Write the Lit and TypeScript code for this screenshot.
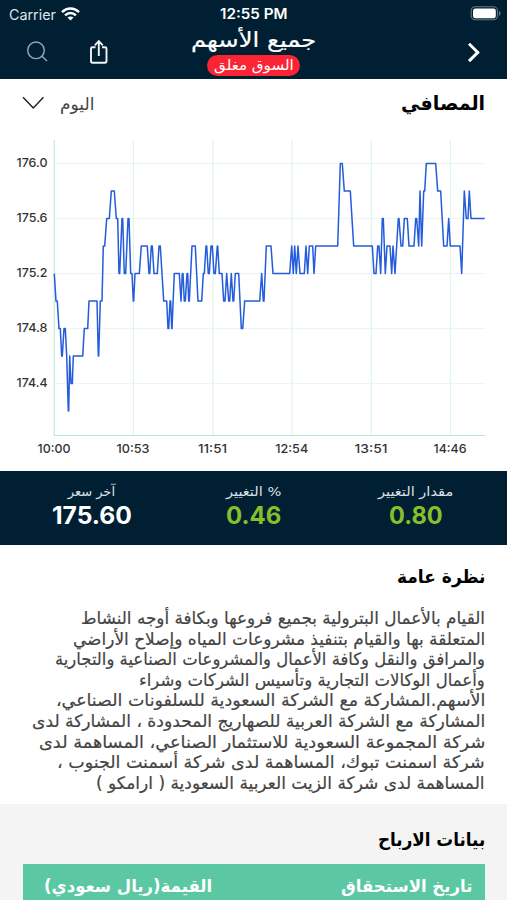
import { LitElement, html, svg, css } from "lit";
import { customElement, property, query } from "lit/decorators.js";

/** One line of text, condensed or widened horizontally to an exact width. */
@customElement("fit-text")
class FitText extends LitElement {
  static styles = css`
    :host { display: block; white-space: nowrap; flex: none; }
    .ink { display: inline-block; transform-origin: 100% 50%; }
    .box { display: flex; }
  `;
  @property({ type: Number }) w = 0;
  @query(".ink") ink!: HTMLElement;
  @query(".box") box!: HTMLElement;

  render() {
    return html`<div class="box" style="width:${this.w}px"><span class="ink"><slot></slot></span></div>`;
  }

  firstUpdated() {
    this.fit();
    document.fonts?.ready.then(() => this.fit());
  }

  fit() {
    const natural = this.ink.offsetWidth;
    const rtl = getComputedStyle(this).direction === "rtl";
    this.ink.style.transformOrigin = rtl ? "100% 50%" : "0 50%";
    if (natural) this.ink.style.transform = `scaleX(${this.w / natural})`;
  }
}

const TOP = 163.6;
const STEP = 27.5;
/** [x, ticks of 0.2 below 176.0] */
const SERIES: [number, number][] = [
  [163,4],[168,5],[172,5],[177,6],[181,6],[185,7],[187,7],[192,6],[196,6],[200,7],[205,9],[206,9],[209,7],[213,8],[217,8],[220,7],[248,7],[253,6],[263,6],[267,5],[291,5],[295,7],[296,7],[301,5],[306,5],[310,3],[314,3],[320,2],[328,2],[334,1],[343,1],[349,2],[353,2],[357,4],[359,4],[366,2],[368,2],[373,4],[377,4],[384,2],[387,2],[392,4],[396,4],[400,5],[401,5],[405,4],[418,4],[424,3],[442,3],[447,4],[449,4],[454,3],[457,3],[462,4],[472,4],[477,3],[481,3],[491,5],[500,5],[504,6],[506,6],[510,5],[512,5],[515,6],[516,6],[523,4],[538,4],[543,5],[547,4],[549,4],[553,5],[556,5],[561,4],[563,4],[566,5],[568,5],[576,3],[586,3],[594,5],[605,5],[610,4],[613,4],[618,3],[620,3],[625,4],[628,4],[633,3],[637,3],[642,4],[646,4],[652,3],[653,3],[658,4],[666,4],[671,5],[675,5],[680,4],[686,5],[689,5],[694,4],[699,5],[701,5],[706,4],[716,4],[724,6],[728,6],[734,5],[779,5],[785,4],[790,5],[792,5],[799,3],[813,3],[819,4],[869,4],[875,3],[880,4],[884,3],[889,4],[894,3],[900,4],[913,4],[918,3],[923,4],[928,3],[938,3],[942,4],[947,3],[1013,3],[1021,0],[1027,0],[1033,1],[1051,1],[1061,3],[1117,3],[1122,4],[1128,4],[1133,3],[1137,3],[1142,4],[1147,2],[1150,2],[1156,4],[1161,3],[1170,3],[1175,4],[1179,3],[1185,4],[1195,2],[1197,2],[1203,3],[1208,3],[1213,2],[1222,2],[1227,3],[1242,3],[1247,2],[1250,2],[1256,3],[1260,1],[1265,3],[1271,1],[1274,1],[1279,0],[1307,0],[1313,1],[1322,1],[1331,3],[1341,3],[1346,2],[1351,3],[1380,3],[1385,4],[1393,1],[1399,2],[1404,2],[1408,1],[1413,2],[1454,2],
];
const PRICES = ["176.0", "175.6", "175.2", "174.8", "174.4"];
const TIMES: [string, number][] = [
  ["10:00", 54], ["10:53", 133], ["11:51", 212.5], ["12:54", 291.7], ["13:51", 371], ["14:46", 450],
];
const STATS = [
  { label: "مقدار التغيير", lw: 75, value: "0.80", vw: 54, up: true },
  { label: "% التغيير", lw: 55, value: "0.46", vw: 55, up: true },
  { label: "آخر سعر", lw: 47, value: "175.60", vw: 80, up: false },
];
const ABOUT: [string, number][] = [
  ["القيام بالأعمال البترولية بجميع فروعها وبكافة أوجه النشاط", 404],
  ["المتعلقة بها والقيام بتنفيذ مشروعات المياه وإصلاح الأراضي", 412],
  ["والمرافق والنقل وكافة الأعمال والمشروعات الصناعية والتجارية", 430],
  ["وأعمال الوكالات التجارية وتأسيس الشركات وشراء", 346],
  ["الأسهم.المشاركة مع الشركة السعودية للسلفونات الصناعي،", 429],
  ["المشاركة مع الشركة العربية للصهاريج المحدودة ، المشاركة لدى", 453],
  ["شركة المجموعة السعودية للاستثمار الصناعي، المساهمة لدى", 446],
  ["شركة اسمنت تبوك، المساهمة لدى شركة أسمنت الجنوب ،", 428],
  ["المساهمة لدى شركة الزيت العربية السعودية ( ارامكو )", 389],
];

@customElement("app-root")
class AppRoot extends LitElement {
  static styles = css`
    :host {
      display: block; width: 507px; height: 900px; overflow: hidden; background: #fff;
      direction: rtl; font-family: Inter, "DejaVu Sans", sans-serif; color: #000;
    }
    svg { display: block; flex: none; }
    .ar { font-family: "DejaVu Sans", sans-serif; }
    .top { background: #001f33; height: 79px; color: #fff; display: flex; flex-direction: column; }
    .status {
      direction: ltr; display: grid; grid-template-columns: 1fr auto 1fr; align-items: center;
      height: 28px; padding: 0 6px; font-size: 14.3px; box-sizing: border-box; flex: none;
    }
    .carrier { display: flex; align-items: center; gap: 5px; padding-left: 3px; color: #dfe4e8; }
    .clock { font-weight: 600; font-size: 14.5px; }
    .clock fit-text { margin-top: -1px; }
    .battery { justify-self: end; margin-top: -2px; }
    .nav {
      direction: ltr; display: grid; grid-template-columns: 1fr auto 1fr; height: 51px;
    }
    .tools { display: flex; gap: 41px; padding: 10px 0 0 26px; }
    .back { justify-self: end; padding: 14px 26px 0 0; }
    .mid { direction: rtl; display: flex; flex-direction: column; align-items: center; }
    .title { font-size: 21px; line-height: 25px; height: 27px; -webkit-text-stroke: .2px currentColor; }
    .badge {
      display: flex; justify-content: center; width: 93px; height: 21px; border-radius: 11px;
      background: #fb2434; font-size: 14px; line-height: 21px;
    }
    .head { display: flex; justify-content: space-between; height: 61px; padding: 0 22px; box-sizing: border-box; }
    .name { font-size: 19.5px; font-weight: 700; line-height: 50px; }
    .range { display: flex; gap: 16px; font-size: 17.5px; line-height: 50px; color: #444; }
    .chev { padding-top: 17px; }
    .tick { font: 500 12px Inter, sans-serif; fill: #333; direction: ltr; }
    .strip {
      background: #001f33; height: 74px; display: grid; grid-template-columns: 162px 162px 162px;
      justify-content: center; padding-top: 11px; box-sizing: border-box; color: #fff;
    }
    .stat { display: flex; flex-direction: column; align-items: center; }
    .label { font-size: 13px; line-height: 20px; color: #dbe1e6; }
    .value { font-size: 24px; font-weight: 650; line-height: 28px; direction: ltr; }
    .up { color: #86bf2b; }
    .about { padding: 19px 22px 0; height: 259px; box-sizing: border-box; }
    .h { font-size: 18px; font-weight: 700; line-height: 26px; height: 26px; }
    .lines {
      padding-top: 18px; font-size: 17.2px; line-height: 20.6px; color: #444;
      -webkit-text-stroke: .2px currentColor;
    }
    .lines fit-text { height: 20.6px; }
    .div { background: #f4f4f4; height: 96px; padding: 23px 22px 0 23px; box-sizing: border-box; }
    .thead {
      margin-top: 11px; height: 40px; background: #5bc8a3; color: #fff; font-weight: 700; font-size: 17px;
      line-height: 45px; display: flex; justify-content: space-between; padding: 0 13px 0 21px;
    }
  `;

  chart() {
    const pts = SERIES.map(([x, l]) => `${(x / 3).toFixed(1)},${TOP - 140 + l * STEP}`).join(" ");
    return html`<svg width="507" height="331" viewBox="0 0 507 331">
      ${PRICES.map((p, i) => {
        const y = TOP - 140 + i * STEP * 2;
        return svg`<line x1="54" x2="485" y1=${y} y2=${y} stroke="#eef3f1"></line>
          <text class="tick" x="16.5" y=${y + 3.8} textLength="31" lengthAdjust="spacingAndGlyphs">${p}</text>`;
      })}
      ${TIMES.map(([t, x], i) => svg`${i ? svg`<line x1=${x + 0.4} x2=${x + 0.4} y1="0" y2="295" stroke="#dff4ee" stroke-width="1.2"></line>` : ""}
          <text class="tick" x=${x} y="313" text-anchor="middle" textLength=${i === 2 ? 29 : 33} lengthAdjust="spacingAndGlyphs">${t}</text>`)}
      <path d="M54.2 0V295.5H485" fill="none" stroke="#b5e6d6" stroke-width="1"></path>
      <polyline points=${pts} fill="none" stroke="#245cdc" stroke-width="1.5" stroke-linejoin="round"></polyline>
    </svg>`;
  }

  render() {
    return html`
      <header class="top">
        <div class="status">
          <div class="carrier"><span>Carrier</span>
            <svg width="19" height="14" viewBox="0 0 19 14" fill="none" stroke="#fff" stroke-width="2.5">
              <path d="M1 5.2C6 .4 13 .4 18 5.2"></path><path d="M4.1 8.3c3.1-3 7.7-3 10.8 0"></path>
              <path d="M9.5 13.6 6.5 10.6c1.7-1.6 4.3-1.6 6 0z" fill="#fff" stroke="none"></path>
            </svg>
          </div>
          <div class="clock"><fit-text w="67">12:55 PM</fit-text></div>
          <svg class="battery" width="31" height="15" viewBox="0 0 31 15">
            <rect x="1.2" y=".8" width="26.3" height="13" rx="4" fill="none" stroke="#667886" stroke-width="1.1"></rect>
            <rect x="3" y="2.5" width="22.8" height="9.7" rx="2.3" fill="#fff"></rect>
            <path d="M29 5c2 .6 2 4.200 0 4.800z" fill="#667886"></path>
          </svg>
        </div>
        <div class="nav">
          <div class="tools">
            <svg width="22" height="28" viewBox="0 0 22 28" fill="none" stroke="#9aa8b2" stroke-width="1.4">
              <circle cx="10" cy="12.300" r="8.300"></circle><path d="M16 18.300 21 23"></path>
            </svg>
            <svg width="20" height="28" viewBox="0 0 20 28" fill="none" stroke="#f2f4f6" stroke-width="1.900">
              <path d="M6.500 9.300H3.500q-1.500 0-1.500 1.500V23q0 1.700 1.500 1.700h12.500q1.500 0 1.500-1.700V10.800q0-1.500-1.500-1.500H13"></path>
              <path d="M9.800 18V4M5.800 7.300 9.800 3.200l4 4.100"></path>
            </svg>
          </div>
          <div class="mid ar">
            <div class="title"><fit-text w="125">جميع الأسهم</fit-text></div>
            <div class="badge"><fit-text w="80">السوق مغلق</fit-text></div>
          </div>
          <svg class="back" width="14" height="22" viewBox="0 0 14 22" fill="none" stroke="#fff" stroke-width="2.900">
            <path d="M2 1.700 10.800 10.400 2 19.100"></path>
          </svg>
        </div>
      </header>
      <section class="head ar">
        <div class="name"><fit-text w="84">المصافي</fit-text></div>
        <div class="range"><fit-text w="34">اليوم</fit-text>
          <svg class="chev" width="22" height="14" viewBox="0 0 22 14" fill="none" stroke="#222" stroke-width="1.500">
            <path d="M1 1.300 11.300 12 21.500 1.300"></path>
          </svg>
        </div>
      </section>
      ${this.chart()}
      <section class="strip">
        ${STATS.map((s) => html`<div class="stat">
          <div class="label ar"><fit-text w=${s.lw}>${s.label}</fit-text></div>
          <div class="value ${s.up ? "up" : ""}"><fit-text w=${s.vw}>${s.value}</fit-text></div>
        </div>`)}
      </section>
      <section class="about ar">
        <div class="h"><fit-text w="89">نظرة عامة</fit-text></div>
        <div class="lines">${ABOUT.map(([t, w]) => html`<fit-text w=${w}>${t}</fit-text>`)}</div>
      </section>
      <section class="div ar">
        <div class="h"><fit-text w="107">بيانات الارباح</fit-text></div>
        <div class="thead">
          <fit-text w="131">تاريخ الاستحقاق</fit-text>
          <fit-text w="168">القيمة(ريال سعودي)</fit-text>
        </div>
      </section>
    `;
  }
}
